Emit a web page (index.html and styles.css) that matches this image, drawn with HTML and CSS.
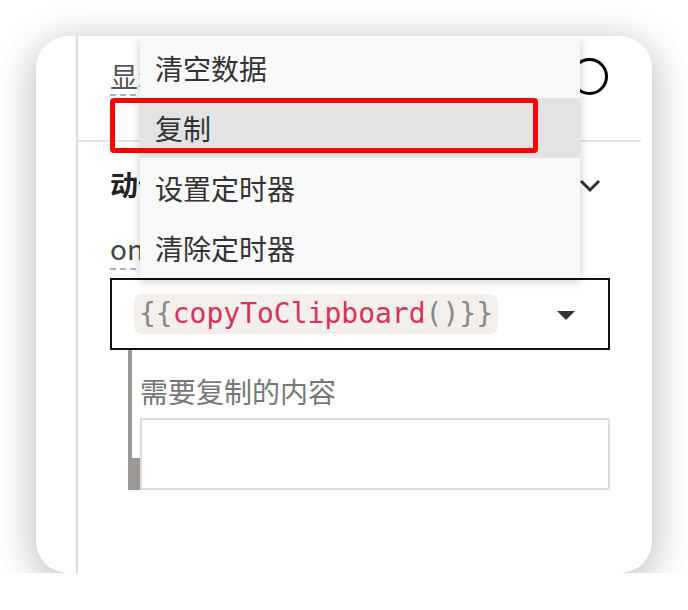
FILE: index.html
```html
<!DOCTYPE html>
<html lang="zh">
<head>
<meta charset="utf-8">
<link rel="stylesheet" href="styles.css">
</head>
<body>
<div class="card">
  <div class="gutter"></div>
  <div class="main">
    <div class="sec-top">
      <span class="lbl">显示</span>
      <span class="knob"></span>
    </div>
    <div class="sec-body">
      <div class="head-row">
        <span class="head">动作</span>
        <svg class="chev" width="22" height="14" viewBox="0 0 22 14"><polyline points="2,2 11,11 20,2" fill="none" stroke="#333" stroke-width="3"/></svg>
      </div>
      <div class="evt-row"><span class="lbl-inline">onClick</span></div>
      <div class="select">
        <span class="chip">{{<span class="fn">copyToClipboard</span>()}}</span>
        <span class="caret"></span>
      </div>
      <div class="sub">
        <div class="sub-label">需要复制的内容</div>
        <div class="sub-row"><span class="grip"></span><div class="input"></div></div>
      </div>
    </div>
  </div>
  <ul class="menu">
    <li>清空数据</li>
    <li class="active">复制</li>
    <li>设置定时器</li>
    <li>清除定时器</li>
  </ul>
  <div class="annot"></div>
</div>
</body>
</html>
```
FILE: styles.css
```css
* { box-sizing: border-box; }
body {
  margin: 0;
  background: #fff;
  font-family: "Noto Sans CJK SC", "Noto Sans", sans-serif;
}
.card {
  position: relative;
  margin: 36px 0 0 36px;
  width: 616px;
  height: 537px;
  border-radius: 32px;
  background: #fff;
  box-shadow: 0 8px 40px rgba(0,0,0,0.3);
  display: flex;
  overflow: hidden;
}
.gutter { width: 40px; flex: none; }
.main {
  flex: 1;
  border-left: 2px solid #dcdce0;
  padding-right: 11px;
}
.sec-top {
  height: 106px;
  padding: 22px 31px 0 32px;
  border-bottom: 2px solid #e4e4e4;
  display: flex;
  justify-content: space-between;
  align-items: flex-start;
}
.lbl {
  font-size: 28px;
  line-height: 36px;
  color: #555;
  border-bottom: 2px dashed #a8b4c4;
}
.knob {
  width: 37px;
  height: 37px;
  border: 3.5px solid #000;
  border-radius: 50%;
  margin-right: 2px;
  background: #fff;
}
.sec-body { padding: 24px 31px 0 32px; }
.head-row {
  display: flex;
  justify-content: space-between;
  align-items: center;
  height: 36px;
}
.head {
  font-size: 28px;
  font-weight: 700;
  color: #222;
  line-height: 36px;
}
.chev { margin-right: 9px; margin-top: 4px; }
.evt-row {
  margin-top: 28px;
  height: 36px;
  font-size: 28px;
  line-height: 36px;
}
.lbl-inline {
  color: #444;
  border-bottom: 2px dashed #a8b4c4;
}
.select {
  margin-top: 12px;
  height: 72px;
  border: 2px solid #111;
  display: flex;
  align-items: center;
  justify-content: space-between;
  padding: 0 33px 0 22px;
}
.chip {
  font-family: "DejaVu Sans Mono", monospace;
  font-size: 28px;
  line-height: 40px;
  background: #f3efec;
  border-radius: 8px;
  padding: 0 5px;
  color: #888;
}
.chip .fn { color: #d9325a; }
.caret {
  width: 0;
  height: 0;
  border-left: 9px solid transparent;
  border-right: 9px solid transparent;
  border-top: 9px solid #333;
  margin-top: 2px;
}
.sub {
  margin-left: 18px;
  border-left: 4px solid #9b9896;
  padding-top: 23px;
  height: 140px;
}
.sub-label {
  padding-left: 8px;
  font-size: 28px;
  line-height: 36px;
  color: #777;
}
.sub-row {
  display: flex;
  align-items: flex-end;
  margin-top: 9px;
}
.grip {
  width: 8px;
  height: 32px;
  background: #9b9896;
  flex: none;
}
.input {
  flex: 1;
  height: 72px;
  border: 2px solid #dcdcdc;
  background: #fff;
}
.menu {
  position: absolute;
  left: 104px;
  top: 0;
  width: 440px;
  margin: 0;
  padding: 2px 0 0;
  list-style: none;
  background: #f9f9f9;
  box-shadow: 0 3px 10px rgba(0,0,0,0.2);
}
.menu li {
  height: 60px;
  line-height: 60px;
  padding-left: 15px;
  font-size: 28px;
  color: #333;
}
.menu li.active { background: #e3e3e3; }
.annot {
  position: absolute;
  left: 74px;
  top: 62px;
  width: 428px;
  height: 55px;
  border: 5px solid #f00;
  border-radius: 4px;
}
```
